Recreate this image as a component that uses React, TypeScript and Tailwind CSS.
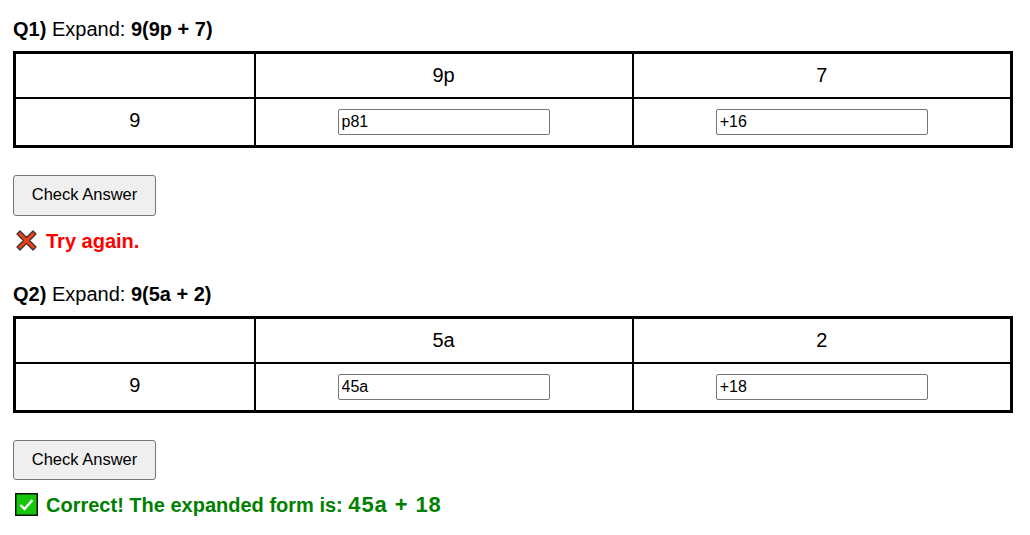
function Cross() {
  return (
    <svg width="23" height="23" viewBox="0 0 23 23" className="shrink-0">
      <path d="M2 5 L5 2 L11.5 8.5 L18 2 L21 5 L14.5 11.5 L21 18 L18 21 L11.5 14.5 L5 21 L2 18 L8.5 11.5 Z" fill="#f03e17" stroke="#333" strokeWidth="1.3" strokeLinejoin="round" />
    </svg>
  );
}

function Check() {
  return (
    <svg width="23" height="23" viewBox="0 0 23 23" className="shrink-0">
      <rect x="0.75" y="0.75" width="21.5" height="21.5" fill="#16c60c" stroke="#111" strokeWidth="1.5" />
      <path d="M5.5 12 L9.5 16 L17.5 7" fill="none" stroke="#fff" strokeWidth="2.4" />
    </svg>
  );
}

function Question({ n, expr, a, b, v1, v2, pad }: { n: string; expr: string; a: string; b: string; v1: string; v2: string; pad: string }) {
  return (
    <section>
      <p className="h-[23px] text-[20px] leading-[23px] text-black">
        <b>{n})</b> Expand: <b>{expr}</b>
      </p>
      <table className="mt-[10px] w-[1000px] table-fixed border-collapse border-[3px] border-black text-center text-[20px] text-black">
        <colgroup>
          <col className="w-[240px]" />
          <col className="w-[378px]" />
          <col />
        </colgroup>
        <tbody>
          <tr className="h-[45px]">
            <td className="border-2 border-black"></td>
            <td className="border-2 border-black">{a}</td>
            <td className="border-2 border-black">{b}</td>
          </tr>
          <tr className="h-[49px]">
            <td className="border-2 border-black pb-[4px]">9</td>
            <td className="border-2 border-black">
              <input readOnly value={v1} className="mx-auto block h-[26px] w-[212px] rounded-[2px] border border-[#767676] bg-white px-[3px] text-[16px] text-black" />
            </td>
            <td className="border-2 border-black">
              <input readOnly value={v2} className="mx-auto block h-[26px] w-[212px] rounded-[2px] border border-[#767676] bg-white px-[3px] text-[16px] text-black" />
            </td>
          </tr>
        </tbody>
      </table>
      <button className={`mt-[27px] block w-[143px] rounded-[3px] border border-[#767676] bg-[#efefef] pb-[2px] text-[16.5px] text-black ${pad}`}>
        Check Answer
      </button>
    </section>
  );
}

export default function App() {
  return (
    <div className="w-[1030px] bg-white px-[13px] pt-[18px] font-['Liberation_Sans',Arial,sans-serif]">
      <Question n="Q1" expr="9(9p + 7)" a="9p" b="7" v1="p81" v2="+16" pad="h-[41px]" />
      <div className="mt-[13px] flex h-[23px] items-center gap-[8px] pl-[2px] text-[20px] font-bold text-[#ff0000]">
        <Cross />
        <span>Try again.</span>
      </div>
      <div className="mt-[31px]">
        <Question n="Q2" expr="9(5a + 2)" a="5a" b="2" v1="45a" v2="+18" pad="h-[40px]" />
      </div>
      <div className="mt-[13px] flex h-[23px] items-center gap-[8px] pl-[2px] text-[20px] font-bold text-[#008000]">
        <Check />
        <span>
          Correct! The expanded form is: <span className="text-[22px] tracking-[0.9px]">45a + 18</span>
        </span>
      </div>
    </div>
  );
}
